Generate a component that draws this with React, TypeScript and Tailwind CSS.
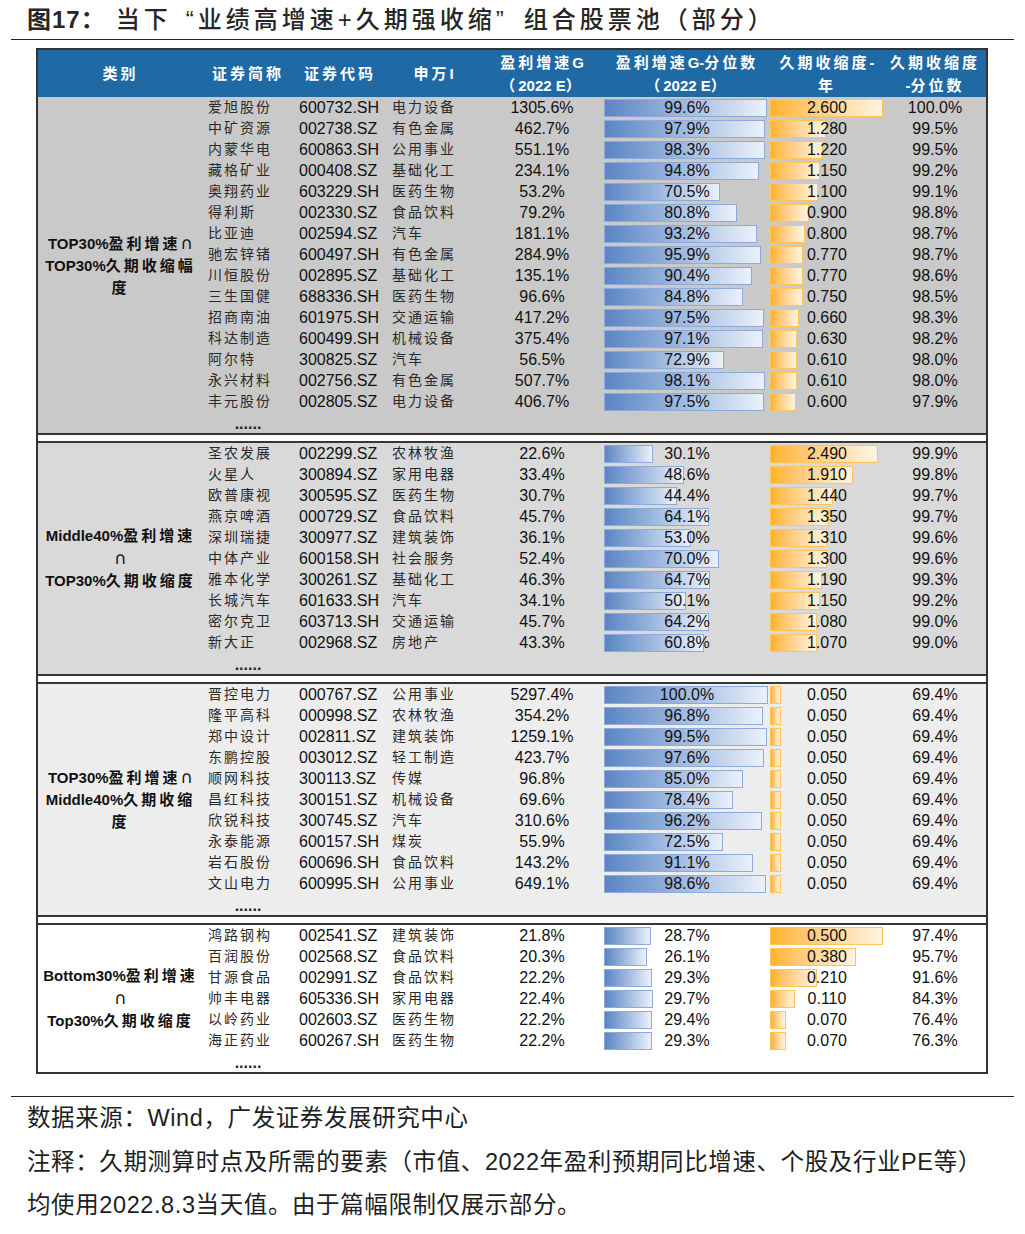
type Row = [string, string, string, string, number, number, string];

type Group = {
  label: string[];
  bg: string;
  durMax: number;
  rows: Row[];
};

const groups: Group[] = [
  {
    label: ["TOP30%盈利增速∩", "TOP30%久期收缩幅", "度"],
    bg: "bg-[#c9c9c9]",
    durMax: 2.6,
    rows: [
      ["爱旭股份", "600732.SH", "电力设备", "1305.6%", 99.6, 2.6, "100.0%"],
      ["中矿资源", "002738.SZ", "有色金属", "462.7%", 97.9, 1.28, "99.5%"],
      ["内蒙华电", "600863.SH", "公用事业", "551.1%", 98.3, 1.22, "99.5%"],
      ["藏格矿业", "000408.SZ", "基础化工", "234.1%", 94.8, 1.15, "99.2%"],
      ["奥翔药业", "603229.SH", "医药生物", "53.2%", 70.5, 1.1, "99.1%"],
      ["得利斯", "002330.SZ", "食品饮料", "79.2%", 80.8, 0.9, "98.8%"],
      ["比亚迪", "002594.SZ", "汽车", "181.1%", 93.2, 0.8, "98.7%"],
      ["驰宏锌锗", "600497.SH", "有色金属", "284.9%", 95.9, 0.77, "98.7%"],
      ["川恒股份", "002895.SZ", "基础化工", "135.1%", 90.4, 0.77, "98.6%"],
      ["三生国健", "688336.SH", "医药生物", "96.6%", 84.8, 0.75, "98.5%"],
      ["招商南油", "601975.SH", "交通运输", "417.2%", 97.5, 0.66, "98.3%"],
      ["科达制造", "600499.SH", "机械设备", "375.4%", 97.1, 0.63, "98.2%"],
      ["阿尔特", "300825.SZ", "汽车", "56.5%", 72.9, 0.61, "98.0%"],
      ["永兴材料", "002756.SZ", "有色金属", "507.7%", 98.1, 0.61, "98.0%"],
      ["丰元股份", "002805.SZ", "电力设备", "406.7%", 97.5, 0.6, "97.9%"],
    ],
  },
  {
    label: ["Middle40%盈利增速", "∩", "TOP30%久期收缩度"],
    bg: "bg-[#d9d9d9]",
    durMax: 2.6,
    rows: [
      ["圣农发展", "002299.SZ", "农林牧渔", "22.6%", 30.1, 2.49, "99.9%"],
      ["火星人", "300894.SZ", "家用电器", "33.4%", 48.6, 1.91, "99.8%"],
      ["欧普康视", "300595.SZ", "医药生物", "30.7%", 44.4, 1.44, "99.7%"],
      ["燕京啤酒", "000729.SZ", "食品饮料", "45.7%", 64.1, 1.35, "99.7%"],
      ["深圳瑞捷", "300977.SZ", "建筑装饰", "36.1%", 53.0, 1.31, "99.6%"],
      ["中体产业", "600158.SH", "社会服务", "52.4%", 70.0, 1.3, "99.6%"],
      ["雅本化学", "300261.SZ", "基础化工", "46.3%", 64.7, 1.19, "99.3%"],
      ["长城汽车", "601633.SH", "汽车", "34.1%", 50.1, 1.15, "99.2%"],
      ["密尔克卫", "603713.SH", "交通运输", "45.7%", 64.2, 1.08, "99.0%"],
      ["新大正", "002968.SZ", "房地产", "43.3%", 60.8, 1.07, "99.0%"],
    ],
  },
  {
    label: ["TOP30%盈利增速∩", "Middle40%久期收缩", "度"],
    bg: "bg-[#ededed]",
    durMax: 2.6,
    rows: [
      ["晋控电力", "000767.SZ", "公用事业", "5297.4%", 100.0, 0.05, "69.4%"],
      ["隆平高科", "000998.SZ", "农林牧渔", "354.2%", 96.8, 0.05, "69.4%"],
      ["郑中设计", "002811.SZ", "建筑装饰", "1259.1%", 99.5, 0.05, "69.4%"],
      ["东鹏控股", "003012.SZ", "轻工制造", "423.7%", 97.6, 0.05, "69.4%"],
      ["顺网科技", "300113.SZ", "传媒", "96.8%", 85.0, 0.05, "69.4%"],
      ["昌红科技", "300151.SZ", "机械设备", "69.6%", 78.4, 0.05, "69.4%"],
      ["欣锐科技", "300745.SZ", "汽车", "310.6%", 96.2, 0.05, "69.4%"],
      ["永泰能源", "600157.SH", "煤炭", "55.9%", 72.5, 0.05, "69.4%"],
      ["岩石股份", "600696.SH", "食品饮料", "143.2%", 91.1, 0.05, "69.4%"],
      ["文山电力", "600995.SH", "公用事业", "649.1%", 98.6, 0.05, "69.4%"],
    ],
  },
  {
    label: ["Bottom30%盈利增速", "∩", "Top30%久期收缩度"],
    bg: "bg-white",
    durMax: 0.5,
    rows: [
      ["鸿路钢构", "002541.SZ", "建筑装饰", "21.8%", 28.7, 0.5, "97.4%"],
      ["百润股份", "002568.SZ", "食品饮料", "20.3%", 26.1, 0.38, "95.7%"],
      ["甘源食品", "002991.SZ", "食品饮料", "22.2%", 29.3, 0.21, "91.6%"],
      ["帅丰电器", "605336.SH", "家用电器", "22.4%", 29.7, 0.11, "84.3%"],
      ["以岭药业", "002603.SZ", "医药生物", "22.2%", 29.4, 0.07, "76.4%"],
      ["海正药业", "600267.SH", "医药生物", "22.2%", 29.3, 0.07, "76.3%"],
    ],
  },
];

const cols = "grid grid-cols-[90px_94px_93px_124px_166px_114px_102px]";

// ascii runs stay tight, CJK runs get the letter spacing, ∩ gets a bigger glyph
function Mixed({ text, track = "tracking-[3px]" }: { text: string; track?: string }) {
  const parts = text.match(/[\x00-\x7F]+|∩|[^\x00-\x7F∩]+/g) ?? [];
  return (
    <>
      {parts.map((p, i) => {
        if (p === "∩")
          return (
            <span key={i} className="font-['DejaVu_Sans'] text-[17px] font-normal">
              ∩
            </span>
          );
        return /^[\x00-\x7F]/.test(p) ? (
          <span key={i}>{p}</span>
        ) : (
          <span key={i} className={track}>
            {p}
          </span>
        );
      })}
    </>
  );
}

function HeadCell({ lines }: { lines: string[] }) {
  return (
    <div className="flex flex-col items-center justify-center leading-[23px]">
      {lines.map((l) => (
        <span key={l} className="whitespace-nowrap">
          <Mixed text={l} />
        </span>
      ))}
    </div>
  );
}

function DataRow({ row, durMax }: { row: Row; durMax: number }) {
  const [name, code, sector, growth, pct, dur, durPct] = row;
  const blueW = (pct / 100) * 164;
  const orangeW = Math.max(11, (dur / durMax) * 113);
  return (
    <div className={`${cols} h-[21px] items-center text-[16px] leading-[21px] text-[#111]`}>
      <div className="pl-[5px] text-[14px] tracking-[2px] text-[#2a2a2a] whitespace-nowrap">{name}</div>
      <div className="pl-[6px]">{code}</div>
      <div className="pl-[5px] text-[14px] tracking-[2px] text-[#2a2a2a] whitespace-nowrap">{sector}</div>
      <div className="text-center">{growth}</div>
      <div className="relative flex h-full items-center">
        <div
          className="h-[18px] border border-[#8eaadb] bg-linear-to-r from-[#5a85c3] to-[#ebf1fa]"
          style={{ width: blueW }}
        />
        <span className="absolute inset-0 flex items-center justify-center">{pct.toFixed(1)}%</span>
      </div>
      <div className="relative flex h-full items-center">
        <div
          className="h-[18px] border border-[#ffc45c] bg-linear-to-r from-[#ffb223] to-[#fff4e0]"
          style={{ width: orangeW }}
        />
        <span className="absolute inset-0 flex items-center justify-center">{dur.toFixed(3)}</span>
      </div>
      <div className="text-center">{durPct}</div>
    </div>
  );
}

export default function App() {
  return (
    <div className="h-[1234px] w-[1025px] bg-white font-['Liberation_Sans','Noto_Sans_CJK_SC',sans-serif] text-[#222]">
      {/* Title */}
      <div className="flex h-[39px] items-center pl-[27px] text-[24px] text-[#262626]">
        <span className="pr-[10px] font-bold tracking-[1px]">图17：</span>
        <span className="font-medium tracking-[4px]">
          当下
          <span className="inline-block w-[26px] text-right">“</span>
          <Mixed text="业绩高增速+久期强收缩" track="tracking-[4px]" />
          <span className="inline-block w-[28px] text-left">”</span>
          组合股票池（部分）
        </span>
      </div>
      <div className="mx-[11px] h-px bg-[#222]" />

      {/* Table */}
      <div className="ml-[36px] mt-[8px] w-[952px] border-2 border-[#333]">
        <div className="grid h-[47px] grid-cols-[165px_1fr] bg-[#1f69a5] text-[15px] font-bold text-white">
          <HeadCell lines={["类别"]} />
          <div className={`${cols} h-full`}>
            <HeadCell lines={["证券简称"]} />
            <HeadCell lines={["证券代码"]} />
            <HeadCell lines={["申万I"]} />
            <HeadCell lines={["盈利增速G", "（2022 E）"]} />
            <HeadCell lines={["盈利增速G-分位数", "（2022 E）"]} />
            <HeadCell lines={["久期收缩度-", "年"]} />
            <HeadCell lines={["久期收缩度", "-分位数"]} />
          </div>
        </div>

        {groups.map((g, gi) => (
          <div key={gi}>
            {gi > 0 && <div className="h-[10px] border-y-2 border-[#363636] bg-white" />}
            <div className={`grid grid-cols-[165px_1fr] ${g.bg}`}>
              <div className="flex flex-col items-center justify-center text-[15px] font-bold leading-[22px] text-[#111]">
                {g.label.map((l) => (
                  <span key={l} className="whitespace-nowrap">
                    <Mixed text={l} />
                  </span>
                ))}
              </div>
              <div>
                {g.rows.map((r) => (
                  <DataRow key={r[1]} row={r} durMax={g.durMax} />
                ))}
                <div className={`${cols} h-[21px]`}>
                  <div className="text-center text-[16px] font-bold leading-[24px] text-[#222]">......</div>
                </div>
              </div>
            </div>
          </div>
        ))}
      </div>

      {/* Notes */}
      <div className="mx-[11px] mt-[22px] h-px bg-[#222]" />
      <div className="pl-[27px] text-[23.5px] leading-[43.5px] tracking-[0.6px] text-[#1e1e1e]">
        <p>数据来源：Wind，广发证券发展研究中心</p>
        <p>注释：久期测算时点及所需的要素（市值、2022年盈利预期同比增速、个股及行业PE等）</p>
        <p>均使用2022.8.3当天值。由于篇幅限制仅展示部分。</p>
      </div>
    </div>
  );
}
